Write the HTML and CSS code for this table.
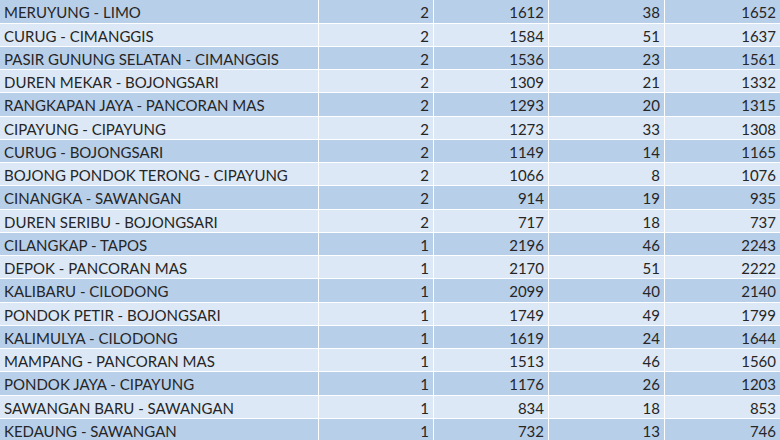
FILE: index.html
```html
<!DOCTYPE html>
<html>
<head>
<meta charset="utf-8">
<link rel="stylesheet" href="styles.css">
</head>
<body>
<div class="sheet">
  <div class="row"><div class="c name">MERUYUNG - LIMO</div><div class="c">2</div><div class="c">1612</div><div class="c">38</div><div class="c">1652</div></div>
  <div class="row"><div class="c name">CURUG - CIMANGGIS</div><div class="c">2</div><div class="c">1584</div><div class="c">51</div><div class="c">1637</div></div>
  <div class="row"><div class="c name">PASIR GUNUNG SELATAN - CIMANGGIS</div><div class="c">2</div><div class="c">1536</div><div class="c">23</div><div class="c">1561</div></div>
  <div class="row"><div class="c name">DUREN MEKAR - BOJONGSARI</div><div class="c">2</div><div class="c">1309</div><div class="c">21</div><div class="c">1332</div></div>
  <div class="row"><div class="c name">RANGKAPAN JAYA - PANCORAN MAS</div><div class="c">2</div><div class="c">1293</div><div class="c">20</div><div class="c">1315</div></div>
  <div class="row"><div class="c name">CIPAYUNG - CIPAYUNG</div><div class="c">2</div><div class="c">1273</div><div class="c">33</div><div class="c">1308</div></div>
  <div class="row"><div class="c name">CURUG - BOJONGSARI</div><div class="c">2</div><div class="c">1149</div><div class="c">14</div><div class="c">1165</div></div>
  <div class="row"><div class="c name">BOJONG PONDOK TERONG - CIPAYUNG</div><div class="c">2</div><div class="c">1066</div><div class="c">8</div><div class="c">1076</div></div>
  <div class="row"><div class="c name">CINANGKA - SAWANGAN</div><div class="c">2</div><div class="c">914</div><div class="c">19</div><div class="c">935</div></div>
  <div class="row"><div class="c name">DUREN SERIBU - BOJONGSARI</div><div class="c">2</div><div class="c">717</div><div class="c">18</div><div class="c">737</div></div>
  <div class="row"><div class="c name">CILANGKAP - TAPOS</div><div class="c">1</div><div class="c">2196</div><div class="c">46</div><div class="c">2243</div></div>
  <div class="row"><div class="c name">DEPOK - PANCORAN MAS</div><div class="c">1</div><div class="c">2170</div><div class="c">51</div><div class="c">2222</div></div>
  <div class="row"><div class="c name">KALIBARU - CILODONG</div><div class="c">1</div><div class="c">2099</div><div class="c">40</div><div class="c">2140</div></div>
  <div class="row"><div class="c name">PONDOK PETIR - BOJONGSARI</div><div class="c">1</div><div class="c">1749</div><div class="c">49</div><div class="c">1799</div></div>
  <div class="row"><div class="c name">KALIMULYA - CILODONG</div><div class="c">1</div><div class="c">1619</div><div class="c">24</div><div class="c">1644</div></div>
  <div class="row"><div class="c name">MAMPANG - PANCORAN MAS</div><div class="c">1</div><div class="c">1513</div><div class="c">46</div><div class="c">1560</div></div>
  <div class="row"><div class="c name">PONDOK JAYA - CIPAYUNG</div><div class="c">1</div><div class="c">1176</div><div class="c">26</div><div class="c">1203</div></div>
  <div class="row"><div class="c name">SAWANGAN BARU - SAWANGAN</div><div class="c">1</div><div class="c">834</div><div class="c">18</div><div class="c">853</div></div>
  <div class="row"><div class="c name">KEDAUNG - SAWANGAN</div><div class="c">1</div><div class="c">732</div><div class="c">13</div><div class="c">746</div></div>
</div>
</body>
</html>
```
FILE: styles.css
```css
html, body {
  margin: 0;
  padding: 0;
  background: #ffffff;
  overflow: hidden;
}
.sheet {
  width: 780px;
  height: 440px;
  padding-top: 0.45px;
  display: flex;
  flex-direction: column;
  gap: 1px;
  font-family: Lato, "Open Sans", sans-serif;
  font-size: 15px;
  color: #262626;
}
.row {
  display: grid;
  grid-template-columns: 318px 114px 114px 115px 1fr;
  column-gap: 1px;
  height: 22.25px;
  flex: none;
}
.c {
  text-align: right;
  padding: 0 4px 0 0;
  line-height: 22.25px;
  padding-top: 1px;
  white-space: nowrap;
  overflow: hidden;
}
.c.name {
  text-align: left;
  padding-left: 4px;
}
.row:nth-child(odd) .c {
  background: #b8cfea;
}
.row:nth-child(even) .c {
  background: #dce8f5;
}
```
